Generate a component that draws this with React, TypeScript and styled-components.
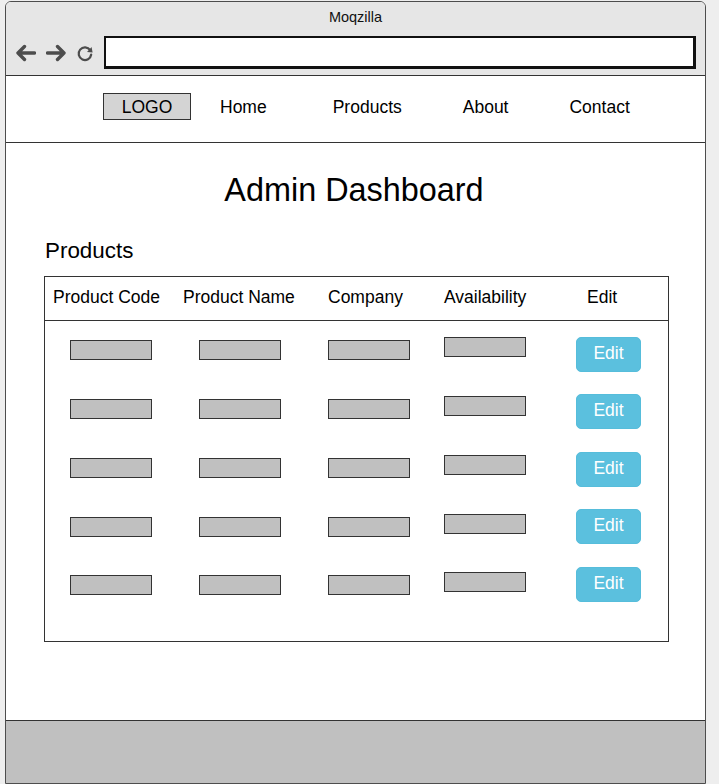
import React from "react";
import styled, { createGlobalStyle } from "styled-components";

const Global = createGlobalStyle`
  html, body { margin: 0; padding: 0; }
  body {
    background: #eeeeee;
    font-family: "Liberation Sans", Arial, sans-serif;
    color: #000;
    overflow: hidden;
  }
`;

const Window = styled.div`
  margin: 1px 0 0 5px;
  width: 701px;
  height: 783px;
  box-sizing: border-box;
  border: 1px solid #4d4d4d;
  border-radius: 6px 6px 0 0;
  background: #fff;
  display: flex;
  flex-direction: column;
  overflow: hidden;
`;

const TitleBar = styled.div`
  height: 74px;
  box-sizing: border-box;
  background: #e6e6e6;
  border-bottom: 1px solid #333;
  padding-top: 5px;
`;

const WindowTitle = styled.div`
  text-align: center;
  font-size: 14.5px;
  line-height: 20px;
  color: #111;
`;

const Toolbar = styled.div`
  margin-top: 9px;
  display: flex;
  align-items: center;
  padding: 0 9px;
  height: 33px;
`;

const IconSlot = styled.div<{ $w: number; $mr: number }>`
  width: ${(p) => p.$w}px;
  height: 20px;
  margin-right: ${(p) => p.$mr}px;
  display: flex;
  align-items: center;
  justify-content: center;
  flex-shrink: 0;
`;

const UrlBox = styled.div`
  flex: 1;
  height: 33px;
  box-sizing: border-box;
  border: 2px solid #111;
  border-right-width: 3px;
  border-bottom-width: 3px;
  background: #fff;
`;

const Nav = styled.nav`
  height: 67px;
  box-sizing: border-box;
  border-bottom: 1px solid #333;
  display: flex;
  align-items: center;
  padding: 0 0 5px 97px;
`;

const LogoBox = styled.div`
  width: 88px;
  height: 27px;
  box-sizing: border-box;
  border: 1px solid #333;
  background: #d4d4d4;
  font-size: 17.5px;
  padding-top: 1px;
  display: flex;
  align-items: center;
  justify-content: center;
`;

const NavLink = styled.span<{ $ml: number }>`
  font-size: 17.5px;
  padding-top: 2px;
  margin-left: ${(p) => p.$ml}px;
`;

const Content = styled.main`
  flex: 1;
  padding-top: 28px;
`;

const PageTitle = styled.h1`
  margin: 0;
  padding-right: 3px;
  text-align: center;
  font-weight: normal;
  font-size: 32.4px;
  line-height: 38px;
`;

const SectionTitle = styled.h2`
  margin: 29px 0 0 39px;
  font-weight: normal;
  font-size: 22.4px;
  line-height: 26px;
`;

const Table = styled.div`
  margin: 12px 0 0 38px;
  width: 625px;
  height: 366px;
  box-sizing: border-box;
  border: 1px solid #333;
`;

const HeaderRow = styled.div`
  display: grid;
  grid-template-columns: 130px 145px 116px 143px auto;
  align-items: center;
  height: 44px;
  box-sizing: border-box;
  border-bottom: 1px solid #333;
  padding: 0 0 2px 8px;
  font-size: 17.5px;
`;

const Row = styled.div`
  display: grid;
  grid-template-columns: 129px 129px 116px 132px 65px;
  align-items: center;
  height: 58.75px;
  padding-left: 25px;
`;

const Field = styled.div<{ $lift?: number }>`
  width: 82px;
  height: 20px;
  box-sizing: border-box;
  border: 1px solid #333;
  background: #c0c0c0;
  margin-bottom: ${(p) => (p.$lift ?? 0) * 2}px;
`;

const EditButton = styled.button<{ $dy: number }>`
  width: 65px;
  height: 35px;
  box-sizing: border-box;
  border: 1px solid #56bddb;
  border-radius: 5px;
  background: #5bc0de;
  color: #fff;
  font-family: "Liberation Sans", Arial, sans-serif;
  font-size: 17.5px;
  padding: 0 0 2px;
  margin-top: ${(p) => p.$dy * 2}px;
  cursor: pointer;
`;

const Footer = styled.footer`
  height: 63px;
  box-sizing: border-box;
  border-top: 1px solid #333;
  background: #c0c0c0;
`;

const BackIcon = () => (
  <svg width="21" height="18" viewBox="0 0 21 18">
    <path d="M19.5 9 H3 M9.5 2.5 L3 9 L9.5 15.5" fill="none" stroke="#4d4d4d" strokeWidth="3.4" strokeLinecap="round" strokeLinejoin="round" />
  </svg>
);

const ForwardIcon = () => (
  <svg width="21" height="18" viewBox="0 0 21 18">
    <path d="M1.5 9 H18 M11.5 2.5 L18 9 L11.5 15.5" fill="none" stroke="#4d4d4d" strokeWidth="3.4" strokeLinecap="round" strokeLinejoin="round" />
  </svg>
);

const ReloadIcon = () => (
  <svg width="18" height="18" viewBox="0 0 18 18">
    <path d="M14.2 6.2 A6.3 6.3 0 1 0 15.2 10.5" fill="none" stroke="#4d4d4d" strokeWidth="2.2" strokeLinecap="round" />
    <path d="M11 8 L16.6 8.4 L15.6 3 Z" fill="#4d4d4d" />
  </svg>
);

const products = [0, 1, 2, 3, 4];

export default function App() {
  return (
    <>
      <Global />
      <Window>
        <TitleBar>
          <WindowTitle>Moqzilla</WindowTitle>
          <Toolbar>
            <IconSlot $w={21} $mr={10}>
              <BackIcon />
            </IconSlot>
            <IconSlot $w={21} $mr={9}>
              <ForwardIcon />
            </IconSlot>
            <IconSlot $w={18} $mr={10}>
              <ReloadIcon />
            </IconSlot>
            <UrlBox />
          </Toolbar>
        </TitleBar>
        <Nav>
          <LogoBox>LOGO</LogoBox>
          <NavLink $ml={29}>Home</NavLink>
          <NavLink $ml={66}>Products</NavLink>
          <NavLink $ml={61}>About</NavLink>
          <NavLink $ml={61}>Contact</NavLink>
        </Nav>
        <Content>
          <PageTitle>Admin Dashboard</PageTitle>
          <SectionTitle>Products</SectionTitle>
          <Table>
            <HeaderRow>
              <span>Product Code</span>
              <span>Product Name</span>
              <span>Company</span>
              <span>Availability</span>
              <span>Edit</span>
            </HeaderRow>
            <div>
              {products.map((p) => (
                <Row key={p}>
                  <Field />
                  <Field />
                  <Field />
                  <Field $lift={3} />
                  <EditButton $dy={4.1 - p * 1.25}>Edit</EditButton>
                </Row>
              ))}
            </div>
          </Table>
        </Content>
        <Footer />
      </Window>
    </>
  );
}
